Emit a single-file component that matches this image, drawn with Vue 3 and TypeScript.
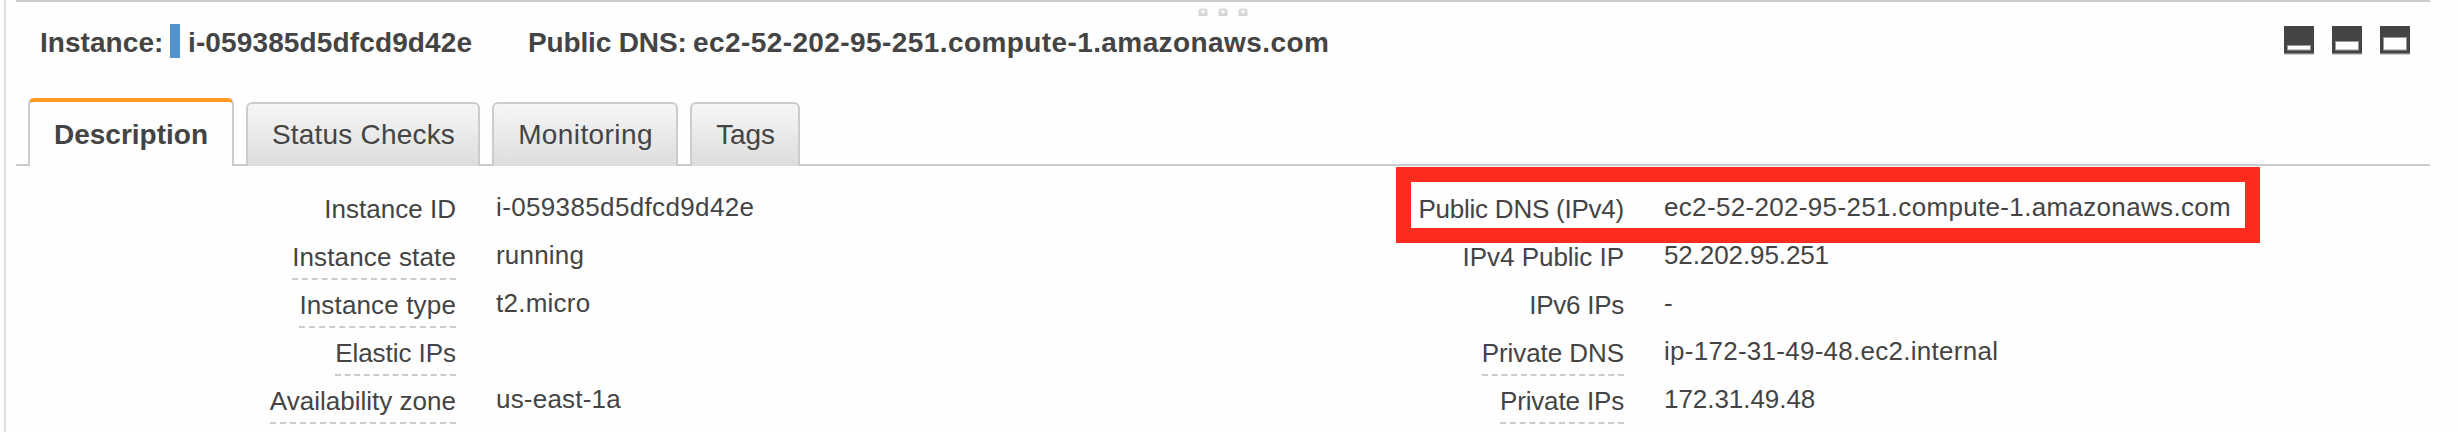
<script setup lang="ts">
interface Field {
  label: string
  value: string
  labelTracking: number
  valueTracking: number
  help?: boolean
  highlighted?: boolean
}

interface Tab {
  title: string
  width: number
  tracking: number
}

const tabs: Tab[] = [
  { title: 'Description', width: 206, tracking: 0 },
  { title: 'Status Checks', width: 234, tracking: 0.2 },
  { title: 'Monitoring', width: 186, tracking: 0.4 },
  { title: 'Tags', width: 110, tracking: -0.15 },
]
const activeTab = 'Description'

const columns: Field[][] = [
  [
    { label: 'Instance ID', value: 'i-059385d5dfcd9d42e', labelTracking: 0.02, valueTracking: 0.36 },
    { label: 'Instance state', value: 'running', labelTracking: 0.14, valueTracking: 0.2, help: true },
    { label: 'Instance type', value: 't2.micro', labelTracking: 0.15, valueTracking: 0.25, help: true },
    { label: 'Elastic IPs', value: '', labelTracking: -0.05, valueTracking: 0, help: true },
    { label: 'Availability zone', value: 'us-east-1a', labelTracking: 0.01, valueTracking: 0.2, help: true },
  ],
  [
    { label: 'Public DNS (IPv4)', value: 'ec2-52-202-95-251.compute-1.amazonaws.com', labelTracking: -0.23, valueTracking: 0.33, highlighted: true },
    { label: 'IPv4 Public IP', value: '52.202.95.251', labelTracking: -0.03, valueTracking: -0.1 },
    { label: 'IPv6 IPs', value: '-', labelTracking: -0.25, valueTracking: 0 },
    { label: 'Private DNS', value: 'ip-172-31-49-48.ec2.internal', labelTracking: -0.07, valueTracking: 0.27, help: true },
    { label: 'Private IPs', value: '172.31.49.48', labelTracking: -0.15, valueTracking: -0.05, help: true },
  ],
]

// Top and height of the open area inside each pane-size icon
const paneIcons = [
  { top: 19.5, height: 4.5 },
  { top: 15.5, height: 8.5 },
  { top: 11.5, height: 12.5 },
]

const spacing = (value: number) => ({ letterSpacing: `${value}px` })
</script>

<template>
  <main class="page">
    <section class="panel">
      <svg class="grip" width="50" height="8" viewBox="0 0 50 8">
        <g v-for="n in 3" :key="n" :transform="`translate(${(n - 1) * 20} 0)`">
          <path d="M0.5 8V3Q0.5 0.5 3.5 0.5H6.5Q9.5 0.5 9.5 3V8Z" fill="#d6d6d6" />
          <path d="M2.5 2.4h5L5 6.2z" fill="#fafafa" />
        </g>
      </svg>

      <header class="summary">
        <h1 class="heading">
          <span class="name">Instance:</span>
          <i class="state-bar"></i>
          <span class="instance-id">i-059385d5dfcd9d42e</span>
          <span class="dns-name">Public DNS:</span>
          <span class="dns">ec2-52-202-95-251.compute-1.amazonaws.com</span>
        </h1>
        <div class="pane-buttons">
          <svg v-for="(icon, i) in paneIcons" :key="i" width="30" height="29" viewBox="0 0 30 29">
            <rect width="30" height="27" fill="#444" />
            <rect y="27" width="30" height="1" fill="#858585" />
            <rect y="28" width="30" height="1" fill="#ccc" />
            <rect x="3.5" :y="icon.top" width="23" :height="icon.height" fill="#fff" stroke="#999" stroke-width="1" />
          </svg>
        </div>
      </header>

      <nav class="tabs">
        <div
          v-for="tab in tabs"
          :key="tab.title"
          class="tab"
          :class="{ active: tab.title === activeTab }"
          :style="{ width: `${tab.width}px`, ...spacing(tab.tracking) }"
        >
          {{ tab.title }}
        </div>
      </nav>

      <div class="details">
        <div v-for="(fields, c) in columns" :key="c" class="column">
          <div v-for="field in fields" :key="field.label" class="field" :class="{ highlighted: field.highlighted }">
            <div class="label">
              <span :class="{ help: field.help }" :style="spacing(field.labelTracking)">{{ field.label }}</span>
            </div>
            <div class="value" :style="spacing(field.valueTracking)">{{ field.value }}</div>
          </div>
        </div>
      </div>
    </section>
  </main>
</template>

<style>
html,
body {
  margin: 0;
  overflow: hidden;
  background: #fefefe;
}
</style>

<style scoped>
.page {
  box-sizing: border-box;
  width: 2454px;
  height: 432px;
  padding-left: 10px;
  overflow: hidden;
  margin-left: 4px;
  border-left: 2px solid #ddd;
  color: #444;
  font-family: "Liberation Sans", Arial, sans-serif;
}

.panel {
  position: relative;
  width: 2414px;
  border-top: 2px solid #ccc;
}

.grip {
  position: absolute;
  top: 6px;
  left: 1182px;
}

.summary {
  display: flex;
  justify-content: space-between;
  height: 96px;
  padding: 22px 20px 0 24px;
  box-sizing: border-box;
}

.heading {
  display: flex;
  height: 34px;
  margin: 0;
  font-size: 28px;
  line-height: 37px;
  white-space: nowrap;
}

.name {
  width: 130px;
  letter-spacing: 0.05px;
}

.state-bar {
  width: 10px;
  height: 34px;
  background: #5294cf;
}

.instance-id {
  width: 340px;
  padding-left: 8px;
  letter-spacing: 0.13px;
}

.dns-name {
  width: 165px;
  letter-spacing: -0.15px;
}

.dns {
  letter-spacing: 0.41px;
}

.pane-buttons {
  display: flex;
  gap: 18px;
  padding-top: 2px;
}

.tabs {
  display: flex;
  align-items: flex-end;
  gap: 12px;
  height: 68px;
  padding-left: 12px;
  background: linear-gradient(#ccc, #ccc) bottom / 100% 2px no-repeat;
}

.tab {
  box-sizing: border-box;
  height: 64px;
  border: 2px solid #ccc;
  border-bottom: 0;
  border-radius: 6px 6px 0 0;
  background: linear-gradient(#f6f6f6, #ddd);
  font-size: 28px;
  line-height: 61px;
  text-align: center;
  text-indent: 1px;
  white-space: nowrap;
}

.tab.active {
  height: 68px;
  border-top: 4px solid #ff9924;
  background: #fefefe;
  font-weight: bold;
  line-height: 65px;
  text-indent: 0;
}

.details {
  display: grid;
  grid-template-columns: 1168px 1fr;
  padding-top: 24px;
}

.field {
  position: relative;
  display: grid;
  grid-template-columns: 440px 1fr;
  column-gap: 40px;
  height: 48px;
  font-size: 26px;
  line-height: 30px;
  white-space: nowrap;
}

.label {
  padding-top: 4px;
  text-align: right;
}

.label span {
  display: inline-block;
}

.label .help {
  padding-bottom: 6px;
  border-bottom: 2px dashed #ccc;
}

.value {
  padding-top: 2px;
}

/* Callout frame drawn over the neighbouring rows */
.highlighted::after {
  content: "";
  position: absolute;
  z-index: 1;
  top: -23px;
  left: 212px;
  box-sizing: border-box;
  width: 864px;
  height: 76px;
  border: 15px solid #ff2b1e;
}
</style>
